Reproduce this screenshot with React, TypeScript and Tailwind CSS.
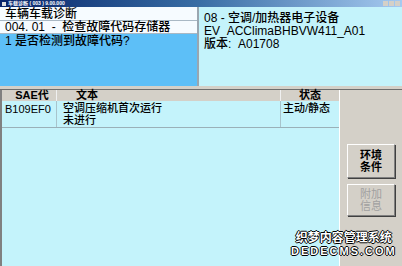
import React from 'react';

const font = { fontFamily: '"Liberation Sans", "Noto Sans CJK SC", sans-serif' };

const App: React.FC = () => {
    return (
        <div
            className="relative w-[402px] h-[266px] flex flex-col bg-[#d4d0c8] overflow-hidden text-black"
            style={font}
        >
            {/* Title bar */}
            <div className="h-[7px] flex items-center justify-between bg-gradient-to-r from-[#0a246a] via-[#3a6ea5] to-[#a6caf0] px-[2px]">
                <div className="flex items-center gap-[2px]">
                    <div className="w-[4px] h-[4px] bg-[#e0e0e0]" />
                    <span className="text-[5px] leading-[5px] text-white font-bold whitespace-nowrap">车载诊断 ( 003 ) 9.00.000</span>
                </div>
                <div className="flex gap-[1px]">
                    <div className="w-[5px] h-[5px] bg-[#d4d0c8]" />
                    <div className="w-[5px] h-[5px] bg-[#d4d0c8]" />
                    <div className="w-[5px] h-[5px] bg-[#d4d0c8]" />
                </div>
            </div>

            {/* Top panels */}
            <div className="h-[79px] flex">
                <div className="w-[199px] flex flex-col border-r-2 border-[#9aa6b0]">
                    <div className="h-[14px] bg-[#f6fbff] border-b border-[#a9b8c4] px-[5px] text-[12px] leading-[13px] pt-[1px] font-medium whitespace-nowrap">
                        车辆车载诊断
                    </div>
                    <div className="h-[13px] bg-[#f6fbff] border-b border-[#a9b8c4] px-[5px] text-[12px] leading-[12px] font-medium whitespace-pre">
                        004. 01  -  检查故障代码存储器
                    </div>
                    <div className="flex-1 bg-[#5dbff7] px-[5px] pt-[1px] text-[12px] leading-[13px] font-medium whitespace-pre">
                        1 是否检测到故障代码?
                    </div>
                </div>
                <div className="flex-1 bg-[#c4f3fb] px-[5px] pt-[5px] text-[12px] leading-[13px] font-medium flex flex-col whitespace-pre">
                    <span>08 - 空调/加热器电子设备</span>
                    <span>EV_ACClimaBHBVW411_A01</span>
                    <span>版本:  A01708</span>
                </div>
            </div>

            {/* Separator band */}
            <div className="h-[4px] bg-[#d4d0c8] border-b border-[#6e6e6e]" />

            {/* Bottom area */}
            <div className="flex-1 flex">
                <div className="w-[339px] flex flex-col bg-[#c4f3fb] border-l-2 border-[#808080]">
                    <div className="h-[11px] flex bg-[#d4d0c8] text-[11px] leading-[11px] font-semibold">
                        <div className="w-[55px] text-center pl-[6px] border-r border-[#f0f0f0]">SAE代</div>
                        <div className="w-[224px] pl-[19px] border-r border-[#f0f0f0]">文本</div>
                        <div className="flex-1 text-center">状态</div>
                    </div>
                    <div className="h-[27px] flex border-b border-[#9ab0b8] text-[11px] leading-[12px] font-medium">
                        <div className="w-[55px] pl-[3px] pt-[2px] border-r border-[#a8c4cc]">B109EF0</div>
                        <div className="w-[224px] pl-[6px] pt-[1px] border-r border-[#a8c4cc] flex flex-col">
                            <span>空调压缩机首次运行</span>
                            <span>未进行</span>
                        </div>
                        <div className="flex-1 pl-[2px] pt-[1px] whitespace-nowrap">主动/静态</div>
                    </div>
                </div>
                <div className="flex-1 flex flex-col items-center pt-[54px] gap-[6px] border-l border-[#ffffff]">
                    <button className="w-[48px] h-[34px] bg-[#d4d0c8] border border-t-white border-l-white border-r-[#808080] border-b-[#808080] shadow-[1px_1px_0_#404040] text-[11px] leading-[12px] font-bold text-black">
                        环境<br />条件
                    </button>
                    <button className="w-[48px] h-[32px] bg-[#d4d0c8] border border-t-white border-l-white border-r-[#808080] border-b-[#808080] shadow-[1px_1px_0_#404040] text-[11px] leading-[12px] text-[#a0a0a0]">
                        附加<br />信息
                    </button>
                </div>
            </div>

            {/* Watermark */}
            <div className="absolute left-[291px] top-[232px] flex flex-col items-center text-white font-bold [text-shadow:1px_0_0_#000,-1px_0_0_#000,0_1px_0_#000,0_-1px_0_#000]">
                <span className="text-[12px] leading-[13px] whitespace-nowrap">织梦内容管理系统</span>
                <span className="text-[11px] leading-[13px] tracking-[2px] whitespace-nowrap">DEDECMS.COM</span>
            </div>
        </div>
    );
};

export default App;
